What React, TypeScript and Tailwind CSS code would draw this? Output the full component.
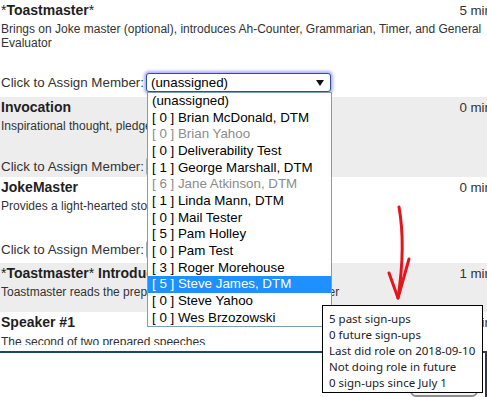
import React from "react";

const items: { label: string; gray?: boolean; sel?: boolean }[] = [
  { label: "(unassigned)" },
  { label: "[ 0 ] Brian McDonald, DTM" },
  { label: "[ 0 ] Brian Yahoo", gray: true },
  { label: "[ 0 ] Deliverability Test" },
  { label: "[ 1 ] George Marshall, DTM" },
  { label: "[ 6 ] Jane Atkinson, DTM", gray: true },
  { label: "[ 1 ] Linda Mann, DTM" },
  { label: "[ 0 ] Mail Tester" },
  { label: "[ 5 ] Pam Holley" },
  { label: "[ 0 ] Pam Test" },
  { label: "[ 3 ] Roger Morehouse" },
  { label: "[ 5 ] Steve James, DTM", sel: true },
  { label: "[ 0 ] Steve Yahoo" },
  { label: "[ 0 ] Wes Brzozowski" },
];

function SelectBox({ focused }: { focused?: boolean }) {
  return (
    <div
      className={
        "ml-[2px] w-[185px] h-[19px] flex items-center justify-between bg-white rounded-[3px] pl-[4px] pr-[6px] text-[13.33px] text-black border " +
        (focused
          ? "border-[#2d4f9a] shadow-[0_0_3px_2px_rgba(110,110,255,0.55)]"
          : "border-[#a9a9a9]")
      }
    >
      <span>(unassigned)</span>
      <svg width="8" height="6" viewBox="0 0 8 6">
        <polygon points="0,0 8,0 4,6" fill="#111" />
      </svg>
    </div>
  );
}

function AssignRow({ focused, mt }: { focused?: boolean; mt: string }) {
  return (
    <div className={"flex items-center h-[19px] " + mt}>
      <span className="text-[13.33px] text-[#333] leading-[19px]">Click to Assign Member:</span>
      <SelectBox focused={focused} />
    </div>
  );
}

function Title({ children, time }: { children: React.ReactNode; time: string }) {
  return (
    <div className="flex justify-between items-baseline text-[14px] leading-[17px] text-[#1f1f1f]">
      <span>{children}</span>
      <span className="text-[13.33px] text-[#333]">{time}</span>
    </div>
  );
}

export default function App() {
  return (
    <div className="relative w-[487px] h-[397px] overflow-hidden bg-white font-['Liberation_Sans',Arial,sans-serif]">
      <div className="w-[492px] h-[353px] border-b-2 border-[#1b4767]">
        <div className="h-[345px] overflow-hidden">
          {/* Section 1 */}
          <div className="pl-[1px] pt-[2px] pb-[5px] bg-white">
            <Title time="5 min">
              *<b>Toastmaster</b>*
            </Title>
            <div className="mt-[3px] text-[12px] leading-[14px] text-[#333]">
              Brings on Joke master (optional), introduces Ah-Counter, Grammarian, Timer, and General Evaluator
            </div>
            <AssignRow focused mt="mt-[23px]" />
          </div>
          {/* Section 2 */}
          <div className="pl-[1px] pt-[2px] pb-[1px] bg-[#ededed]">
            <Title time="0 min">
              <b>Invocation</b>
            </Title>
            <div className="mt-[3px] text-[12px] leading-[14px] text-[#333]">
              Inspirational thought, pledge of allegiance
            </div>
            <AssignRow mt="mt-[24px]" />
          </div>
          {/* Section 3 */}
          <div className="pl-[1px] pt-[2px] pb-[4px] bg-white">
            <Title time="0 min">
              <b>JokeMaster</b>
            </Title>
            <div className="mt-[3px] text-[12px] leading-[14px] text-[#333]">
              Provides a light-hearted story or joke
            </div>
            <AssignRow mt="mt-[27px]" />
          </div>
          {/* Section 4 */}
          <div className="pl-[1px] pt-[2px] pb-[13px] bg-[#ededed]">
            <Title time="1 min">
              *<b>Toastmaster</b>* <b>Introduces Speaker</b>
            </Title>
            <div className="mt-[3px] text-[12px] leading-[14px] text-[#333] whitespace-nowrap">
              Toastmaster reads the prepared introduction for the 1st speaker
            </div>
          </div>
          {/* Section 5 */}
          <div className="pl-[1px] pt-[2px] bg-white">
            <Title time="5-7 min">
              <b>Speaker #1</b>
            </Title>
            <div className="mt-[4px] text-[12px] leading-[14px] text-[#333]">
              The second of two prepared speeches
            </div>
          </div>
        </div>
      </div>

      {/* bottom right controls */}
      <div className="absolute left-[410px] top-[358px] w-[68px] h-[39px] rounded-[6px] border-2 border-[#8c8c8c] bg-[#f4f4f4]" />
      <div className="absolute left-[485px] top-[353px] w-[2px] h-[44px] bg-[#2a3a4a]" />

      {/* dropdown list */}
      <div className="absolute left-[147px] top-[92px] w-[185px] border border-[#7f9db9] bg-white text-[13.33px]">
        {items.map((it) => (
          <div
            key={it.label}
            className={
              "h-[16.67px] leading-[16.67px] pl-[4px] whitespace-nowrap " +
              (it.sel ? "bg-[#1e90ff] text-white" : it.gray ? "text-[#8c8c8c]" : "text-black")
            }
          >
            {it.label}
          </div>
        ))}
      </div>

      {/* red hand-drawn arrow */}
      <svg className="absolute left-0 top-0 pointer-events-none" width="487" height="397">
        <path
          d="M399 207 C 404 235, 403 265, 398 298"
          fill="none"
          stroke="#e3161e"
          strokeWidth="3"
          strokeLinecap="round"
        />
        <path
          d="M389 273 L398 298 L409 259"
          fill="none"
          stroke="#e3161e"
          strokeWidth="3"
          strokeLinecap="round"
          strokeLinejoin="round"
        />
      </svg>

      {/* tooltip */}
      <div className="absolute left-[322px] top-[305px] w-[161px] h-[88px] border border-black bg-white pl-[6px] pt-[5px] font-['Noto_Sans',sans-serif] text-[11.5px] leading-[16px] text-[#222]">
        <div>5 past sign-ups</div>
        <div>0 future sign-ups</div>
        <div>Last did role on 2018-09-10</div>
        <div>Not doing role in future</div>
        <div>0 sign-ups since July 1</div>
      </div>
    </div>
  );
}
